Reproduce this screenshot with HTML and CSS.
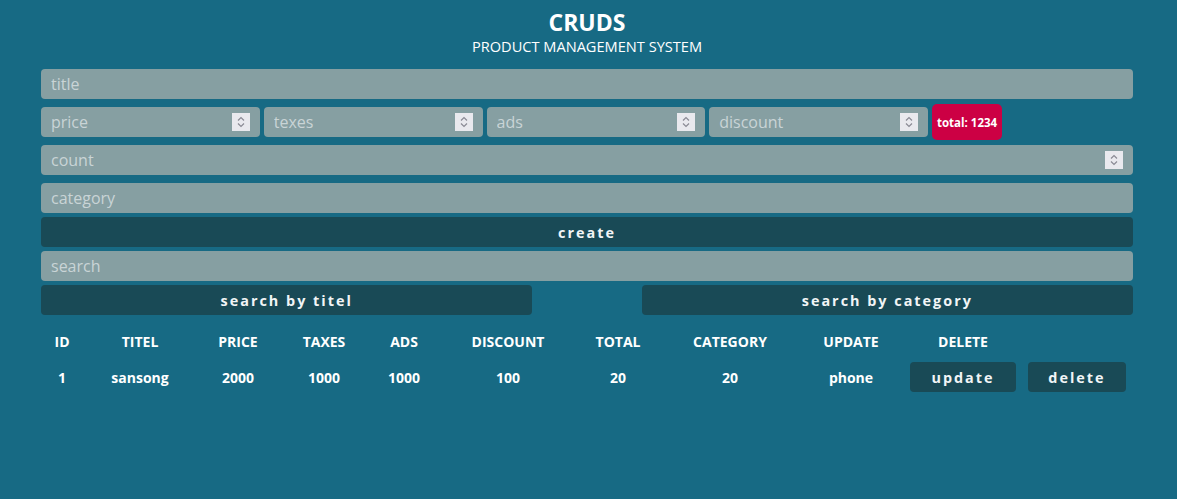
FILE: index.html
```html
<!DOCTYPE html>
<html lang="en">
<head>
<meta charset="utf-8">
<title>CRUDS</title>
<link rel="stylesheet" href="styles.css">
</head>
<body>
<div class="crud">
  <header class="head">
    <h2 class="brand">CRUDS</h2>
    <p class="sub">PRODUCT MANAGEMENT SYSTEM</p>
  </header>
  <section class="inputs">
    <input class="field" type="text" placeholder="title">
    <div class="price-row">
      <label class="num short"><input class="bare" type="number" placeholder="price"><span class="spin"><svg viewBox="0 0 18 18" width="18" height="18"><path d="M6 7.5 L9 4.5 L12 7.5 M6 10.5 L9 13.5 L12 10.5" fill="none" stroke="#8a8a94" stroke-width="1.2"/></svg></span></label>
      <label class="num short"><input class="bare" type="number" placeholder="texes"><span class="spin"><svg viewBox="0 0 18 18" width="18" height="18"><path d="M6 7.5 L9 4.5 L12 7.5 M6 10.5 L9 13.5 L12 10.5" fill="none" stroke="#8a8a94" stroke-width="1.2"/></svg></span></label>
      <label class="num short"><input class="bare" type="number" placeholder="ads"><span class="spin"><svg viewBox="0 0 18 18" width="18" height="18"><path d="M6 7.5 L9 4.5 L12 7.5 M6 10.5 L9 13.5 L12 10.5" fill="none" stroke="#8a8a94" stroke-width="1.2"/></svg></span></label>
      <label class="num short"><input class="bare" type="number" placeholder="discount"><span class="spin"><svg viewBox="0 0 18 18" width="18" height="18"><path d="M6 7.5 L9 4.5 L12 7.5 M6 10.5 L9 13.5 L12 10.5" fill="none" stroke="#8a8a94" stroke-width="1.2"/></svg></span></label>
      <small class="total">total: 1234</small>
    </div>
    <label class="num wide"><input class="bare" type="number" placeholder="count"><span class="spin"><svg viewBox="0 0 18 18" width="18" height="18"><path d="M6 7.5 L9 4.5 L12 7.5 M6 10.5 L9 13.5 L12 10.5" fill="none" stroke="#8a8a94" stroke-width="1.2"/></svg></span></label>
    <input class="field" type="text" placeholder="category">
    <button class="btn create">create</button>
  </section>
  <section class="search-block">
    <input class="field" type="text" placeholder="search">
    <div class="btn-row">
      <button class="btn half">search by titel</button>
      <button class="btn half">search by category</button>
    </div>
  </section>
  <section class="outputs">
    <div class="row head-row">
      <div class="cell">ID</div>
      <div class="cell">TITEL</div>
      <div class="cell">PRICE</div>
      <div class="cell">TAXES</div>
      <div class="cell">ADS</div>
      <div class="cell">DISCOUNT</div>
      <div class="cell">TOTAL</div>
      <div class="cell">CATEGORY</div>
      <div class="cell">UPDATE</div>
      <div class="cell">DELETE</div>
      <div class="cell"></div>
    </div>
    <div class="row body-row">
      <div class="cell">1</div>
      <div class="cell">sansong</div>
      <div class="cell">2000</div>
      <div class="cell">1000</div>
      <div class="cell">1000</div>
      <div class="cell">100</div>
      <div class="cell">20</div>
      <div class="cell">20</div>
      <div class="cell">phone</div>
      <div class="cell"><button class="btn small upd">update</button></div>
      <div class="cell"><button class="btn small del">delete</button></div>
    </div>
  </section>
</div>
</body>
</html>
```
FILE: styles.css
```css
* { box-sizing: border-box; }
html, body {
  margin: 0;
  padding: 0;
  background: #176a84;
  color: #ffffff;
  font-family: "Open Sans", "Noto Sans", sans-serif;
}
.crud {
  width: 1092px;
  margin: 0 0 0 41px;
  padding-top: 8px;
}
.head {
  text-align: center;
}
.brand {
  margin: 0;
  font-size: 23px;
  font-weight: 700;
  line-height: 28px;
}
.sub {
  margin: 0;
  font-size: 14.6px;
  line-height: 20px;
}
.inputs {
  margin-top: 13px;
  display: flex;
  flex-direction: column;
}
.field,
.num {
  width: 100%;
  height: 30px;
  border: none;
  outline: none;
  border-radius: 4px;
  background: #869fa2;
  color: #ffffff;
  font-family: inherit;
  font-size: 16px;
  margin: 0;
}
.field {
  padding: 0 10px;
}
.num {
  display: flex;
  align-items: center;
  padding-right: 10px;
}
.bare {
  flex: 1;
  min-width: 0;
  height: 30px;
  border: none;
  outline: none;
  background: transparent;
  color: #ffffff;
  font-family: inherit;
  font-size: 16px;
  padding: 0 10px;
  -moz-appearance: textfield;
}
.bare::-webkit-inner-spin-button,
.bare::-webkit-outer-spin-button {
  -webkit-appearance: none;
  margin: 0;
}
.field::placeholder,
.bare::placeholder {
  color: #c9d4d6;
}
.spin {
  width: 18px;
  height: 18px;
  background: #e9e9ee;
  display: flex;
  flex: none;
}
.inputs > .field,
.inputs > .num,
.price-row {
  margin-bottom: 8px;
}
.price-row {
  display: flex;
  align-items: center;
  gap: 4px;
  height: 30px;
}
.num.short {
  width: 218.75px;
  flex: none;
}
.total {
  background: #cc0044;
  color: #ffffff;
  font-size: 11.5px;
  font-weight: 700;
  border-radius: 5px;
  height: 36px;
  padding: 0 5px;
  display: flex;
  align-items: center;
  flex: none;
}
.inputs > .field:nth-last-of-type(1) {
  margin-bottom: 4px;
}
.btn {
  border: none;
  border-radius: 4px;
  background: #194a56;
  color: #f1f5f6;
  font-family: inherit;
  font-weight: 700;
  font-size: 14.4px;
  letter-spacing: 2px;
  height: 30px;
  cursor: pointer;
}
.create {
  width: 100%;
  margin-bottom: 4px;
}
.search-block .field {
  margin-bottom: 4px;
}
.btn-row {
  display: flex;
  justify-content: space-between;
}
.half {
  width: 45%;
}
.outputs {
  margin-top: 15px;
}
.row {
  display: grid;
  grid-template-columns: 42px 114px 82px 90px 70px 138px 82px 142px 100px 124px 1fr;
  align-items: center;
  text-align: center;
  font-weight: 700;
  font-size: 14px;
}
.head-row {
  height: 22px;
}
.body-row {
  margin-top: 8px;
  height: 34px;
}
.small {
  height: 30px;
  font-size: 14.4px;
}
.upd { width: 106px; }
.del { width: 98px; margin-left: -4px; }
```
